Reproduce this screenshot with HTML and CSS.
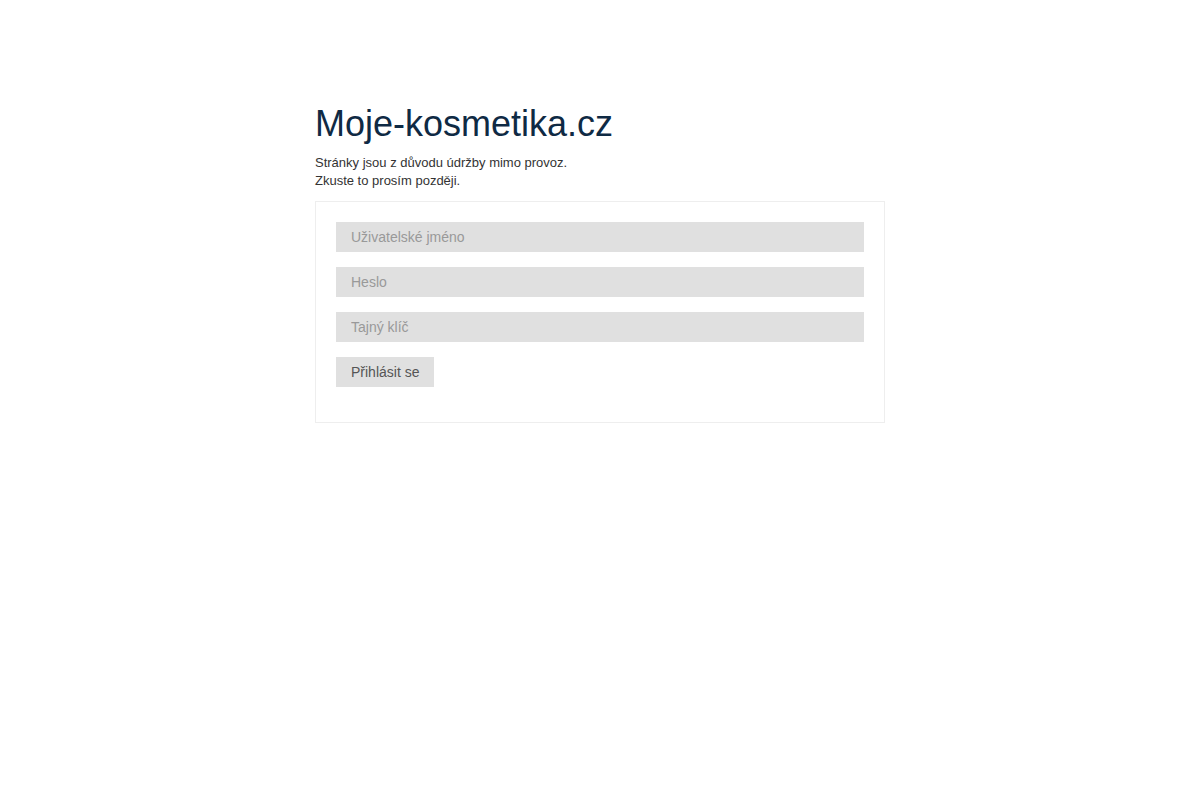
FILE: index.html
```html
<!DOCTYPE html>
<html lang="cs">
<head>
<meta charset="utf-8">
<title>Moje-kosmetika.cz</title>
<link rel="stylesheet" href="styles.css">
</head>
<body>
<div class="wrap">
  <h1 class="title">Moje-kosmetika.cz</h1>
  <p class="note">Stránky jsou z důvodu údržby mimo provoz.<br>Zkuste to prosím později.</p>
  <form class="box">
    <input class="field" type="text" placeholder="Uživatelské jméno">
    <input class="field" type="password" placeholder="Heslo">
    <input class="field" type="text" placeholder="Tajný klíč">
    <button class="btn" type="button">Přihlásit se</button>
  </form>
</div>
</body>
</html>
```
FILE: styles.css
```css
html, body {
  margin: 0;
  padding: 0;
  background: #fff;
  font-family: "Liberation Sans", Arial, sans-serif;
}
.wrap {
  width: 570px;
  margin: 0 auto;
  padding-top: 103px;
}
.title {
  margin: 0;
  font-size: 36px;
  line-height: 42px;
  font-weight: normal;
  color: #0f2a44;
}
.note {
  margin: 9px 0 11px;
  font-size: 13px;
  line-height: 18px;
  color: #333;
}
.box {
  border: 1px solid #eee;
  padding: 20px 20px 35px;
  display: flex;
  flex-direction: column;
  align-items: flex-start;
  gap: 15px;
}
.field {
  box-sizing: border-box;
  width: 100%;
  height: 30px;
  margin: 0;
  padding: 0 15px;
  border: none;
  background: #e0e0e0;
  font-family: "Liberation Sans", Arial, sans-serif;
  font-size: 14px;
  color: #555;
  outline: none;
}
.field::placeholder {
  color: #999;
  opacity: 1;
}
.btn {
  box-sizing: border-box;
  height: 30px;
  margin: 0;
  padding: 0 15px;
  border: none;
  background: #e0e0e0;
  font-family: "Liberation Sans", Arial, sans-serif;
  font-size: 14px;
  color: #555;
  cursor: pointer;
}
```
